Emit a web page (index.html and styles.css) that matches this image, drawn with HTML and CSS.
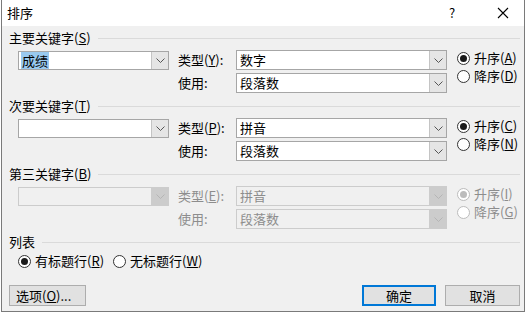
FILE: index.html
```html
<!DOCTYPE html>
<html lang="zh-CN">
<head>
<meta charset="utf-8">
<title>排序</title>
<link rel="stylesheet" href="styles.css">
</head>
<body>
<div class="win">
  <div class="titlebar">
    <span class="title">排序</span>
    <span class="help">?</span>
    <svg class="close" width="12" height="12" viewBox="0 0 12 12"><path d="M1 1L11 11M11 1L1 11" stroke="#000" stroke-width="1.1" fill="none"/></svg>
  </div>
  <div class="body">
    <section class="group">
      <div class="ghead"><span>主要关键字(<u>S</u>)</span><i class="rule"></i></div>
      <div class="grow">
        <div class="combo key"><span class="val"><span class="sel">成绩</span></span><span class="btn"><svg width="9" height="5" viewBox="0 0 9 5"><path d="M0.5 0.5L4.5 4.5L8.5 0.5" stroke="#555" fill="none"/></svg></span></div>
        <div class="fields">
          <span class="flabel">类型(<u>Y</u>):</span>
          <div class="combo"><span class="val">数字</span><span class="btn"><svg width="9" height="5" viewBox="0 0 9 5"><path d="M0.5 0.5L4.5 4.5L8.5 0.5" stroke="#555" fill="none"/></svg></span></div>
          <span class="flabel">使用:</span>
          <div class="combo"><span class="val">段落数</span><span class="btn"><svg width="9" height="5" viewBox="0 0 9 5"><path d="M0.5 0.5L4.5 4.5L8.5 0.5" stroke="#555" fill="none"/></svg></span></div>
        </div>
        <div class="radios">
          <div class="radio on"><i class="dot"></i><span>升序(<u>A</u>)</span></div>
          <div class="radio"><i class="dot"></i><span>降序(<u>D</u>)</span></div>
        </div>
      </div>
    </section>

    <section class="group">
      <div class="ghead"><span>次要关键字(<u>T</u>)</span><i class="rule"></i></div>
      <div class="grow">
        <div class="combo key"><span class="val"></span><span class="btn"><svg width="9" height="5" viewBox="0 0 9 5"><path d="M0.5 0.5L4.5 4.5L8.5 0.5" stroke="#555" fill="none"/></svg></span></div>
        <div class="fields">
          <span class="flabel">类型(<u>P</u>):</span>
          <div class="combo"><span class="val">拼音</span><span class="btn"><svg width="9" height="5" viewBox="0 0 9 5"><path d="M0.5 0.5L4.5 4.5L8.5 0.5" stroke="#555" fill="none"/></svg></span></div>
          <span class="flabel">使用:</span>
          <div class="combo"><span class="val">段落数</span><span class="btn"><svg width="9" height="5" viewBox="0 0 9 5"><path d="M0.5 0.5L4.5 4.5L8.5 0.5" stroke="#555" fill="none"/></svg></span></div>
        </div>
        <div class="radios">
          <div class="radio on"><i class="dot"></i><span>升序(<u>C</u>)</span></div>
          <div class="radio"><i class="dot"></i><span>降序(<u>N</u>)</span></div>
        </div>
      </div>
    </section>

    <section class="group">
      <div class="ghead"><span>第三关键字(<u>B</u>)</span><i class="rule"></i></div>
      <div class="grow disabled">
        <div class="combo key"><span class="val"></span><span class="btn"><svg width="9" height="5" viewBox="0 0 9 5"><path d="M0.5 0.5L4.5 4.5L8.5 0.5" stroke="#b5b5b5" fill="none"/></svg></span></div>
        <div class="fields">
          <span class="flabel">类型(<u>E</u>):</span>
          <div class="combo"><span class="val">拼音</span><span class="btn"><svg width="9" height="5" viewBox="0 0 9 5"><path d="M0.5 0.5L4.5 4.5L8.5 0.5" stroke="#b5b5b5" fill="none"/></svg></span></div>
          <span class="flabel">使用:</span>
          <div class="combo"><span class="val">段落数</span><span class="btn"><svg width="9" height="5" viewBox="0 0 9 5"><path d="M0.5 0.5L4.5 4.5L8.5 0.5" stroke="#b5b5b5" fill="none"/></svg></span></div>
        </div>
        <div class="radios">
          <div class="radio on"><i class="dot"></i><span>升序(<u>I</u>)</span></div>
          <div class="radio"><i class="dot"></i><span>降序(<u>G</u>)</span></div>
        </div>
      </div>
    </section>

    <section class="group list">
      <div class="ghead"><span>列表</span><i class="rule"></i></div>
      <div class="lrow">
        <div class="radio on"><i class="dot"></i><span>有标题行(<u>R</u>)</span></div>
        <div class="radio"><i class="dot"></i><span>无标题行(<u>W</u>)</span></div>
      </div>
    </section>

    <div class="buttons">
      <button class="b opt">选项(<u>O</u>)...</button>
      <span class="spacer"></span>
      <button class="b ok">确定</button>
      <button class="b">取消</button>
    </div>
  </div>
</div>
</body>
</html>
```

FILE: styles.css
```css
* { box-sizing: border-box; }
html, body { margin: 0; padding: 0; background: #ffffff; }
body {
  font-family: "Noto Sans CJK SC", "Noto Sans", sans-serif;
  font-size: 13px;
  color: #000;
}
u { text-decoration: underline; text-underline-offset: 1px; }

.win {
  margin-left: 1px;
  width: 524px;
  height: 312px;
  border: 1px solid #7a7a7a;
  border-top: none;
  background: #f0f0f0;
  display: flex;
  flex-direction: column;
}

.titlebar {
  height: 26px;
  background: #ffffff;
  display: flex;
  align-items: center;
  padding-left: 5px;
  flex: none;
}
.title { line-height: 16px; flex: 1; }
.help { width: 10px; margin-right: 38px; line-height: 16px; }
.close { margin-right: 15px; }

.body {
  flex: 1;
  display: flex;
  flex-direction: column;
  padding: 4px 4px 5px 7px;
}

.ghead {
  display: flex;
  align-items: center;
  height: 16px;
  line-height: 16px;
  white-space: nowrap;
}
.rule {
  flex: 1;
  height: 1px;
  background: #dadada;
  margin-left: 7px;
}

.group { margin-bottom: 5px; }
.grow {
  display: grid;
  grid-template-columns: 151px 269px max-content;
  column-gap: 9px;
  padding-left: 9px;
  margin-top: 4px;
  align-items: start;
}
.grow .key { margin-top: 1px; height: 19px; }

.fields {
  display: grid;
  grid-template-columns: 58px 211px;
  grid-auto-rows: 20px;
  row-gap: 3px;
  align-items: center;
  white-space: nowrap;
}
.flabel { line-height: 16px; }

.combo {
  height: 20px;
  border: 1px solid #a6a6a6;
  background: #fff;
  display: flex;
  align-items: stretch;
}
.combo .val {
  flex: 1;
  padding-left: 2px;
  line-height: 17px;
  overflow: hidden;
  white-space: nowrap;
}
.sel { background: #99c9ef; padding: 0 1px; }
.combo .btn {
  width: 17px;
  background: #e5e5e5;
  border-left: 1px solid #c4c4c4;
  display: flex;
  align-items: center;
  justify-content: center;
}
.fields .combo .val { padding-left: 3px; }

.radios {
  display: flex;
  flex-direction: column;
  margin-top: -1px;
  margin-left: 1px;
}
.radio {
  display: flex;
  align-items: center;
  height: 18px;
  line-height: 16px;
  white-space: nowrap;
}
.radio .dot {
  width: 13px;
  height: 13px;
  border: 1px solid #333;
  border-radius: 50%;
  background: #fff;
  margin-right: 4px;
  position: relative;
  flex: none;
}
.radio.on .dot::after {
  content: "";
  position: absolute;
  left: 2px;
  top: 2px;
  width: 7px;
  height: 7px;
  border-radius: 50%;
  background: #1a1a1a;
}

.disabled { color: #8d8d8d; }
.disabled .combo { border-color: #cccccc; background: #f0f0f0; }
.disabled .combo .btn { background: #cccccc; border-left-color: #cccccc; }
.disabled .radio .dot { border-color: #bcbcbc; }
.disabled .radio.on .dot::after { background: #bcbcbc; }
.disabled .radio { color: #8d8d8d; }

.lrow {
  display: flex;
  gap: 9px;
  padding-left: 9px;
  margin-top: 2px;
}
.list { margin-bottom: 0; }

.buttons {
  margin-top: auto;
  display: flex;
  gap: 9px;
}
.spacer { flex: 1; }
.b {
  font: inherit;
  height: 21px;
  width: 75px;
  padding: 0;
  line-height: 17px;
  background: #e1e1e1;
  border: 1px solid #adadad;
  color: #000;
  white-space: nowrap;
}
.b.opt { width: 77px; text-align: left; padding-left: 6px; margin-left: 0; }
.b.ok { border: 2px solid #0078d7; width: 74px; }
```
